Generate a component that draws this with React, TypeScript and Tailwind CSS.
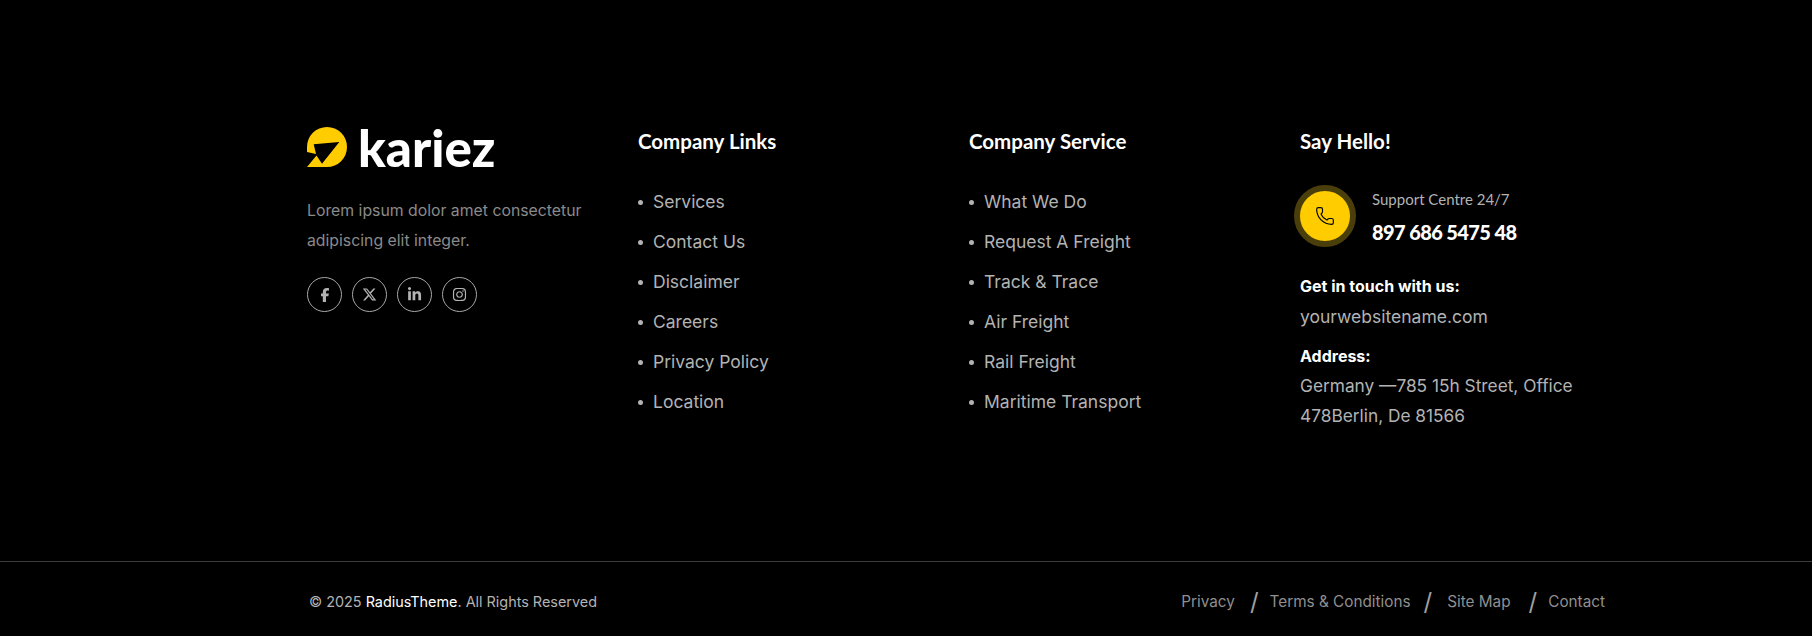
import React from 'react';
import { Phone } from 'lucide-react';
import { FaFacebookF, FaInstagram, FaLinkedinIn, FaXTwitter } from 'react-icons/fa6';

const companyLinks = ['Services', 'Contact Us', 'Disclaimer', 'Careers', 'Privacy Policy', 'Location'];
const companyService = ['What We Do', 'Request A Freight', 'Track & Trace', 'Air Freight', 'Rail Freight', 'Maritime Transport'];

const Logo = () => (
  <svg width="40" height="40" viewBox="0 0 40 40" className="shrink-0">
    <path
      d="M20 0A20 20 0 0 1 20 40H0L9.500 28.500 15 36.700 32.300 15 6.700 17.300 9 27 0 25V20A20 20 0 0 1 20 0Z"
      fill="#ffcc00"
    />
  </svg>
);

const FooterList = ({ title, items }: { title: string; items: string[] }) => (
  <div className="w-[331px] shrink-0 pt-[5px]">
    <h3 className="font-['Lato',sans-serif] text-[20.500px] leading-[24px] font-bold text-white">{title}</h3>
    <ul className="mt-[29px] flex flex-col">
      {items.map((item) => (
        <li key={item} className="flex h-[40px] items-center gap-[10px] text-[17.500px] text-[#b3b3b3]">
          <span className="size-[5px] rounded-full bg-[#b3b3b3]" />
          {item}
        </li>
      ))}
    </ul>
  </div>
);

const socials = [
  <FaFacebookF key="f" size={14} />,
  <FaXTwitter key="x" size={15} />,
  <FaLinkedinIn key="in" size={15} />,
  <FaInstagram key="ig" size={15} />,
];

export default function App() {
  return (
    <div className="h-[636px] w-full overflow-hidden bg-black font-['Inter',sans-serif]">
      <div className="h-[562px] border-b border-[#3a3a3a] pl-[307px] pt-[124px]">
        <div className="flex">
          <div className="w-[331px] shrink-0">
            <div className="flex h-[46px] items-center gap-[11px]">
              <Logo />
              <span className="font-['Lato',sans-serif] text-[51px] leading-none font-black text-white">kariez</span>
            </div>
            <p className="mt-[26px] w-[290px] text-[15.800px] leading-[30px] text-[#8a8a8a]">
              Lorem ipsum dolor amet consectetur adipiscing elit integer.
            </p>
            <div className="mt-[21px] flex gap-[10px] text-[#b3b3b3]">
              {socials.map((icon, i) => (
                <span key={i} className="flex size-[35px] items-center justify-center rounded-full border border-[#a8a8a8]">
                  {icon}
                </span>
              ))}
            </div>
          </div>
          <FooterList title="Company Links" items={companyLinks} />
          <FooterList title="Company Service" items={companyService} />
          <div className="w-[290px] pt-[5px]">
            <h3 className="font-['Lato',sans-serif] text-[20.500px] leading-[24px] font-bold text-white">Say Hello!</h3>
            <div className="mt-[32px] flex items-center gap-[16px]">
              <span className="-ml-[6px] flex size-[62px] items-center justify-center rounded-full border-[6px] border-[#4a3f0a] bg-[#ffcc00]">
                <Phone size={20} strokeWidth={1.400} className="text-black" />
              </span>
              <div>
                <div className="font-['Lato',sans-serif] text-[15px] leading-[22px] text-[#b3b3b3]">Support Centre 24/7</div>
                <div className="mt-[9px] font-['Lato',sans-serif] text-[20px] leading-[26px] font-black tracking-[-0.6px] text-white">897 686 5475 48</div>
              </div>
            </div>
            <div className="mt-[27px] text-[16px] leading-[24px] font-bold text-white">Get in touch with us:</div>
            <div className="mt-[4px] text-[17.500px] leading-[30px] text-[#b3b3b3]">yourwebsitename.com</div>
            <div className="mt-[12px] text-[16px] leading-[24px] font-bold text-white">Address:</div>
            <div className="mt-[3px] text-[17.300px] leading-[30px] text-[#b3b3b3]">
              Germany —785 15h Street, Office
              <br />
              478Berlin, De 81566
            </div>
          </div>
        </div>
      </div>
      <div className="flex h-[74px] items-center justify-between pl-[309px] pr-[207px] pt-[6px] text-[14.400px] text-[#b3b3b3]">
        <div>
          © 2025 <span className="text-white">RadiusTheme</span>. All Rights Reserved
        </div>
        <div className="flex items-center text-[15.300px] text-[#8f8f8f]">
          <span>Privacy</span>
          <span className="ml-[15px] mr-[11px] text-[24px] leading-none text-[#a0a0a0]">/</span>
          <span>Terms &amp; Conditions</span>
          <span className="ml-[13px] mr-[15px] text-[24px] leading-none text-[#a0a0a0]">/</span>
          <span>Site Map</span>
          <span className="ml-[18px] mr-[11px] text-[24px] leading-none text-[#a0a0a0]">/</span>
          <span>Contact</span>
        </div>
      </div>
    </div>
  );
}
